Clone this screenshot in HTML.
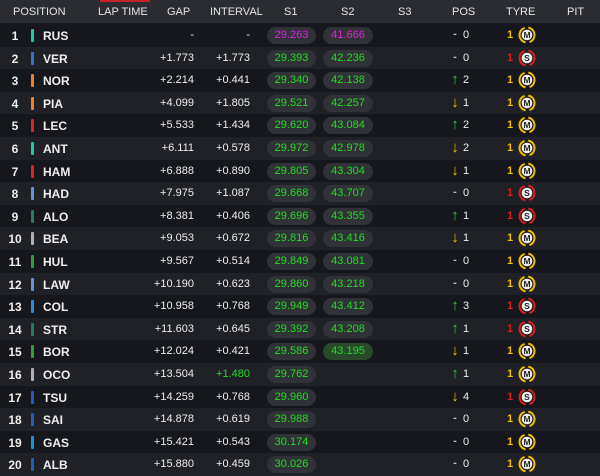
<!DOCTYPE html><html><head><style>
body{margin:0;width:600px;height:476px;overflow:hidden;background:#15171c;font-family:"Liberation Sans",sans-serif;color:#eee;font-size:11px}
.h{height:24px;background:#2a2c31;position:relative;border-bottom:1px solid #1a1b1f;box-sizing:border-box}
.h span{position:absolute;top:6px;color:#e6e6e6;font-size:11px}
.red{position:absolute;left:100px;width:50px;top:0;height:2px;background:#c8202a}
.r{height:22.6px;position:relative}
.r:nth-child(even){background:#1f2126}
.r>*{position:absolute;top:5px}
.n{left:3px;width:24px;text-align:center;font-weight:bold;font-size:12px}
.b{left:31px;width:3px;height:13px;top:5px;border-radius:1px}
.c{left:43px;font-weight:bold;font-size:12px}
.g{left:130px;width:64px;text-align:right}
.i{left:186px;width:64px;text-align:right}
.p{top:3px;height:17px;line-height:17px;border-radius:9px;background:#303237;color:#22dd22;text-align:center;font-size:11px}
.s1{left:267px;width:49px}.s2{left:323px;width:50px}
.pa{left:448px;width:14px;text-align:center;font-weight:bold;font-size:15px;top:2px}
.pa.ds{font-size:11px;top:4px}
.pn{left:461px;width:10px;text-align:center}
.tc{left:507px;font-weight:bold}
.t{left:518px;top:2px}
.up{color:#2ecc40}.dn{color:#f0c000}.ds{color:#bbb}
.y{color:#f0c000}.rd{color:#d82020}
</style></head><body>
<div class="h"><div class="red"></div>
<span style="left:13px">POSITION</span><span style="left:98px">LAP TIME</span><span style="left:167px">GAP</span><span style="left:210px">INTERVAL</span><span style="left:284px">S1</span><span style="left:341px">S2</span><span style="left:398px">S3</span><span style="left:452px">POS</span><span style="left:506px">TYRE</span><span style="left:567px">PIT</span></div>
<svg width="0" height="0" style="position:absolute"><defs>
<g id="M"><circle cx="9" cy="9" r="7.5" fill="none" stroke="#f0c000" stroke-width="2" stroke-dasharray="19.55 4" transform="rotate(-80 9 9)"/><circle cx="9" cy="9" r="5.3" fill="#eee"/><text x="9" y="12.2" text-anchor="middle" font-size="8.5" font-weight="bold" font-family="Liberation Sans" fill="#222">M</text></g>
<g id="S"><circle cx="9" cy="9" r="7.5" fill="none" stroke="#d82020" stroke-width="2" stroke-dasharray="19.55 4" transform="rotate(-80 9 9)"/><circle cx="9" cy="9" r="5.3" fill="#eee"/><text x="9" y="12.2" text-anchor="middle" font-size="8.5" font-weight="bold" font-family="Liberation Sans" fill="#222">S</text></g>
</defs></svg>
<div>
<div class="r"><span class="n">1</span><i class="b" style="background:#27c4a8"></i><span class="c">RUS</span><span class="g">-</span><span class="i">-</span><span class="p s1" style="color:#e020e0">29.263</span><span class="p s2" style="color:#e020e0">41.666</span><span class="pa ds">-</span><span class="pn">0</span><span class="tc y">1</span><svg class="t" width="18" height="18"><use href="#M"/></svg></div>
<div class="r"><span class="n">2</span><i class="b" style="background:#3a6fd0"></i><span class="c">VER</span><span class="g">+1.773</span><span class="i">+1.773</span><span class="p s1">29.393</span><span class="p s2">42.236</span><span class="pa ds">-</span><span class="pn">0</span><span class="tc rd">1</span><svg class="t" width="18" height="18"><use href="#S"/></svg></div>
<div class="r"><span class="n">3</span><i class="b" style="background:#f08020"></i><span class="c">NOR</span><span class="g">+2.214</span><span class="i">+0.441</span><span class="p s1">29.340</span><span class="p s2">42.138</span><span class="pa up">↑</span><span class="pn">2</span><span class="tc y">1</span><svg class="t" width="18" height="18"><use href="#M"/></svg></div>
<div class="r"><span class="n">4</span><i class="b" style="background:#f08020"></i><span class="c">PIA</span><span class="g">+4.099</span><span class="i">+1.805</span><span class="p s1">29.521</span><span class="p s2">42.257</span><span class="pa dn">↓</span><span class="pn">1</span><span class="tc y">1</span><svg class="t" width="18" height="18"><use href="#M"/></svg></div>
<div class="r"><span class="n">5</span><i class="b" style="background:#e0202a"></i><span class="c">LEC</span><span class="g">+5.533</span><span class="i">+1.434</span><span class="p s1">29.620</span><span class="p s2">43.084</span><span class="pa up">↑</span><span class="pn">2</span><span class="tc y">1</span><svg class="t" width="18" height="18"><use href="#M"/></svg></div>
<div class="r"><span class="n">6</span><i class="b" style="background:#27c4a8"></i><span class="c">ANT</span><span class="g">+6.111</span><span class="i">+0.578</span><span class="p s1">29.972</span><span class="p s2">42.978</span><span class="pa dn">↓</span><span class="pn">2</span><span class="tc y">1</span><svg class="t" width="18" height="18"><use href="#M"/></svg></div>
<div class="r"><span class="n">7</span><i class="b" style="background:#e0202a"></i><span class="c">HAM</span><span class="g">+6.888</span><span class="i">+0.890</span><span class="p s1">29.805</span><span class="p s2">43.304</span><span class="pa dn">↓</span><span class="pn">1</span><span class="tc y">1</span><svg class="t" width="18" height="18"><use href="#M"/></svg></div>
<div class="r"><span class="n">8</span><i class="b" style="background:#6a8ee0"></i><span class="c">HAD</span><span class="g">+7.975</span><span class="i">+1.087</span><span class="p s1">29.668</span><span class="p s2">43.707</span><span class="pa ds">-</span><span class="pn">0</span><span class="tc rd">1</span><svg class="t" width="18" height="18"><use href="#S"/></svg></div>
<div class="r"><span class="n">9</span><i class="b" style="background:#1e8060"></i><span class="c">ALO</span><span class="g">+8.381</span><span class="i">+0.406</span><span class="p s1">29.696</span><span class="p s2">43.355</span><span class="pa up">↑</span><span class="pn">1</span><span class="tc rd">1</span><svg class="t" width="18" height="18"><use href="#S"/></svg></div>
<div class="r"><span class="n">10</span><i class="b" style="background:#b0b0b8"></i><span class="c">BEA</span><span class="g">+9.053</span><span class="i">+0.672</span><span class="p s1">29.816</span><span class="p s2">43.416</span><span class="pa dn">↓</span><span class="pn">1</span><span class="tc y">1</span><svg class="t" width="18" height="18"><use href="#M"/></svg></div>
<div class="r"><span class="n">11</span><i class="b" style="background:#2aa040"></i><span class="c">HUL</span><span class="g">+9.567</span><span class="i">+0.514</span><span class="p s1">29.849</span><span class="p s2">43.081</span><span class="pa ds">-</span><span class="pn">0</span><span class="tc y">1</span><svg class="t" width="18" height="18"><use href="#M"/></svg></div>
<div class="r"><span class="n">12</span><i class="b" style="background:#6a8ee0"></i><span class="c">LAW</span><span class="g">+10.190</span><span class="i">+0.623</span><span class="p s1">29.860</span><span class="p s2">43.218</span><span class="pa ds">-</span><span class="pn">0</span><span class="tc y">1</span><svg class="t" width="18" height="18"><use href="#M"/></svg></div>
<div class="r"><span class="n">13</span><i class="b" style="background:#2a8ae0"></i><span class="c">COL</span><span class="g">+10.958</span><span class="i">+0.768</span><span class="p s1">29.949</span><span class="p s2">43.412</span><span class="pa up">↑</span><span class="pn">3</span><span class="tc rd">1</span><svg class="t" width="18" height="18"><use href="#S"/></svg></div>
<div class="r"><span class="n">14</span><i class="b" style="background:#1e8060"></i><span class="c">STR</span><span class="g">+11.603</span><span class="i">+0.645</span><span class="p s1">29.392</span><span class="p s2">43.208</span><span class="pa up">↑</span><span class="pn">1</span><span class="tc rd">1</span><svg class="t" width="18" height="18"><use href="#S"/></svg></div>
<div class="r"><span class="n">15</span><i class="b" style="background:#2aa040"></i><span class="c">BOR</span><span class="g">+12.024</span><span class="i">+0.421</span><span class="p s1">29.586</span><span class="p s2" style="background:#2a4a2c">43.195</span><span class="pa dn">↓</span><span class="pn">1</span><span class="tc y">1</span><svg class="t" width="18" height="18"><use href="#M"/></svg></div>
<div class="r"><span class="n">16</span><i class="b" style="background:#b0b0b8"></i><span class="c">OCO</span><span class="g">+13.504</span><span class="i" style="color:#22dd22">+1.480</span><span class="p s1">29.762</span><span class="pa up">↑</span><span class="pn">1</span><span class="tc y">1</span><svg class="t" width="18" height="18"><use href="#M"/></svg></div>
<div class="r"><span class="n">17</span><i class="b" style="background:#1f5fc0"></i><span class="c">TSU</span><span class="g">+14.259</span><span class="i">+0.768</span><span class="p s1">29.960</span><span class="pa dn">↓</span><span class="pn">4</span><span class="tc rd">1</span><svg class="t" width="18" height="18"><use href="#S"/></svg></div>
<div class="r"><span class="n">18</span><i class="b" style="background:#1f5fc0"></i><span class="c">SAI</span><span class="g">+14.878</span><span class="i">+0.619</span><span class="p s1">29.988</span><span class="pa ds">-</span><span class="pn">0</span><span class="tc y">1</span><svg class="t" width="18" height="18"><use href="#M"/></svg></div>
<div class="r"><span class="n">19</span><i class="b" style="background:#1a90e0"></i><span class="c">GAS</span><span class="g">+15.421</span><span class="i">+0.543</span><span class="p s1">30.174</span><span class="pa ds">-</span><span class="pn">0</span><span class="tc y">1</span><svg class="t" width="18" height="18"><use href="#M"/></svg></div>
<div class="r"><span class="n">20</span><i class="b" style="background:#1f5fc0"></i><span class="c">ALB</span><span class="g">+15.880</span><span class="i">+0.459</span><span class="p s1">30.026</span><span class="pa ds">-</span><span class="pn">0</span><span class="tc y">1</span><svg class="t" width="18" height="18"><use href="#M"/></svg></div>
</div>
</body></html>
